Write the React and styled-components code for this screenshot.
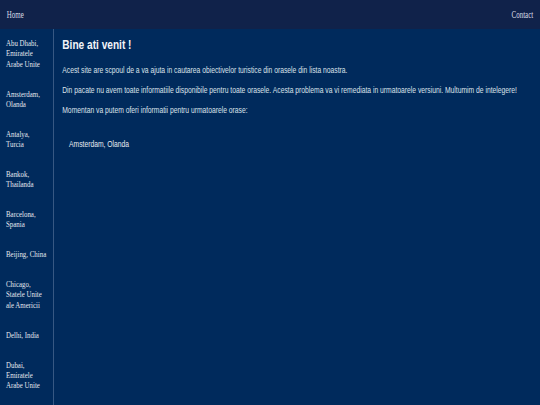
import React from "react";
import styled, { createGlobalStyle } from "styled-components";

const Global = createGlobalStyle`
  html, body {
    margin: 0;
    padding: 0;
    width: 540px;
    height: 405px;
    overflow: hidden;
    background: #002a5c;
  }
  * { box-sizing: border-box; }
`;

/* The reference is a wide page squeezed horizontally (3:4), so the page is
   laid out 720px wide and narrowed to the 540px window as a whole. */
const Shell = styled.div`
  width: 720px;
  height: 405px;
  transform: scaleX(0.75);
  transform-origin: 0 0;
  display: flex;
  flex-direction: column;
  background: #002a5c;
  overflow: hidden;
`;

const TopBar = styled.header`
  height: 29px;
  flex: none;
  display: flex;
  align-items: center;
  justify-content: space-between;
  padding: 0 9px;
  background: #10224a;
`;

const TopLink = styled.a`
  font-family: "Liberation Serif", "Times New Roman", serif;
  font-size: 9.3px;
  color: #d9dde6;
  text-decoration: none;
`;

const Body = styled.div`
  flex: 1;
  display: flex;
  min-height: 0;
`;

const Sidebar = styled.nav`
  width: 72px;
  flex: none;
  border-right: 1px solid #4a6890;
  padding: 9px 8px 0 8px;
  display: flex;
  flex-direction: column;
  gap: 19.5px;
`;

const CityLink = styled.a`
  font-family: "Liberation Serif", "Times New Roman", serif;
  font-size: 9.2px;
  line-height: 10.35px;
  color: #e4e7ee;
  text-decoration: none;
`;

const Main = styled.main`
  flex: 1;
  padding: 8px 11px 0 11px;
  font-family: "Liberation Sans", Arial, sans-serif;
  color: #dde2ea;
`;

const Title = styled.h2`
  margin: 0 0 12px 0;
  font-size: 13.5px;
  line-height: 15.5px;
  font-weight: bold;
  color: #f2f4f8;
`;

const Para = styled.p`
  margin: 0 0 10px 0;
  font-size: 9px;
  line-height: 10.35px;
`;

const CityList = styled.div`
  margin-top: 23px;
  padding-left: 9px;
  display: flex;
  flex-direction: column;
`;

const CityEntry = styled.a`
  font-size: 9px;
  line-height: 10.35px;
  color: #e8ebf1;
  text-decoration: none;
`;

const cities = [
  "Abu Dhabi, Emiratele Arabe Unite",
  "Amsterdam, Olanda",
  "Antalya, Turcia",
  "Bankok, Thailanda",
  "Barcelona, Spania",
  "Beijing, China",
  "Chicago, Statele Unite ale Americii",
  "Delhi, India",
  "Dubai, Emiratele Arabe Unite",
];

export default function App() {
  return (
    <>
      <Global />
      <Shell>
        <TopBar>
          <TopLink href="#">Home</TopLink>
          <TopLink href="#">Contact</TopLink>
        </TopBar>
        <Body>
          <Sidebar>
            {cities.map((c) => (
              <CityLink key={c} href="#">
                {c}
              </CityLink>
            ))}
          </Sidebar>
          <Main>
            <Title>Bine ati venit !</Title>
            <Para>
              Acest site are scpoul de a va ajuta in cautarea obiectivelor turistice din orasele din lista noastra.
            </Para>
            <Para>
              Din pacate nu avem toate informatiile disponibile pentru toate orasele. Acesta problema va vi remediata in urmatoarele versiuni. Multumim de intelegere!
            </Para>
            <Para>Momentan va putem oferi informatii pentru urmatoarele orase:</Para>
            <CityList>
              <CityEntry href="#">Amsterdam, Olanda</CityEntry>
            </CityList>
          </Main>
        </Body>
      </Shell>
    </>
  );
}
